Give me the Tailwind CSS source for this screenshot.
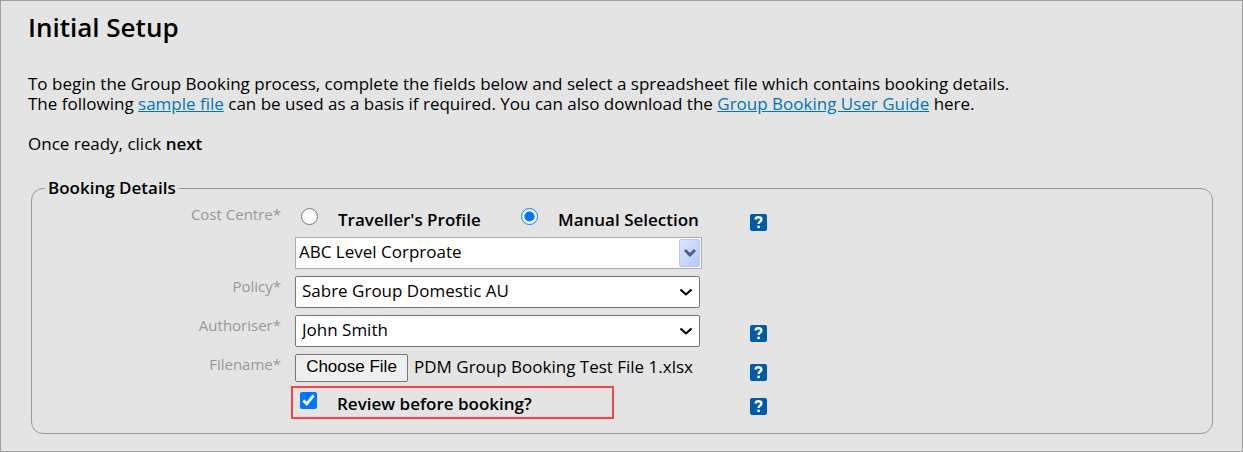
<!DOCTYPE html>
<html lang="en">

<head>
    <meta charset="UTF-8" />
    <meta name="viewport" content="width=device-width, initial-scale=1.0" />
    <title>Group Booking - Initial Setup</title>
    <script src="https://cdn.jsdelivr.net/npm/@tailwindcss/browser@4"></script>
</head>

<body class="bg-[#e4e4e4] text-black text-[17px] leading-5 font-['Trebuchet_MS','Open_Sans',sans-serif]">
    <main class="min-h-screen border border-[#a0a0a0] pl-[27px] pr-[29px] pt-[10px] pb-4">
        <h1 class="text-[26px] leading-8 font-semibold">Initial Setup</h1>

        <div class="mt-[31px]">
            <p>To begin the Group Booking process, complete the fields below and select a spreadsheet file which contains booking details.</p>
            <p>The following <a href="#" class="text-[#0076b6] underline">sample file</a> can be used as a basis if required. You can also download the <a href="#" class="text-[#0076b6] underline">Group Booking User Guide</a> here.</p>
            <p class="mt-5">Once ready, click <b class="font-semibold">next</b></p>
        </div>

        <form class="mt-6 ml-[3px]">
            <fieldset class="border border-[#999] rounded-xl pb-[14px]">
                <legend class="ml-[13px] px-[3px] font-semibold">Booking Details</legend>

                <!-- Cost centre -->
                <div class="flex items-start pt-[6px]">
                    <label for="costCentre" class="w-[249px] shrink-0 text-right text-[15px] leading-5 text-[#999]">Cost Centre*</label>
                    <div class="ml-[14px] w-[455px] shrink-0">
                        <div class="flex h-[33px] pl-[6px]">
                            <div class="flex w-[220px] items-start">
                                <input type="radio" name="costType" id="profile" class="w-[17px] h-[17px] mt-1 shrink-0" />
                                <label for="profile" class="ml-5 mt-[6px] font-semibold whitespace-nowrap">Traveller's Profile</label>
                            </div>
                            <div class="flex items-start">
                                <input type="radio" name="costType" id="manual" class="w-[17px] h-[17px] mt-1 shrink-0" checked />
                                <label for="manual" class="ml-5 mt-[6px] font-semibold whitespace-nowrap">Manual Selection</label>
                            </div>
                        </div>
                        <div class="flex w-[407px] h-8 border border-[#a9adb3] bg-white">
                            <input type="text" id="costCentre" value="ABC Level Corproate" class="min-w-0 flex-1 px-[3px] pb-[2px] outline-none" />
                            <button type="button" aria-label="Show cost centres" class="m-px w-[21px] rounded-xs border border-[#b5c8f5] bg-linear-to-br from-[#dce6ff] to-[#b4c8f9] flex items-center justify-center">
                                <svg class="w-3 h-3" viewBox="0 0 12 12" fill="none" stroke="#4d6185" stroke-width="3"><path d="M1 3l5 5 5-5" /></svg>
                            </button>
                        </div>
                    </div>
                    <button type="button" aria-label="Help" class="mt-[10px] w-[17px] h-[17px] rounded-xs bg-[#005bab] text-white flex items-center justify-center">
                        <svg class="w-[17px] h-[17px]" viewBox="0 0 17 17" fill="none" stroke="currentColor" stroke-width="2.4"><path d="M5.500 5.500C5.700 3.700 7 3.200 8.400 3.200c1.800 0 3 .8 3 2.300 0 2-2.800 2.100-2.800 4.500" /><path d="M7.300 11.700h2.600v2.400h-2.600z" fill="currentColor" stroke="none" /></svg>
                    </button>
                </div>

                <!-- Policy -->
                <div class="flex items-start mt-[7px]">
                    <label for="policy" class="w-[249px] shrink-0 text-right text-[15px] leading-5 text-[#999]">Policy*</label>
                    <div class="ml-[14px] w-[455px] shrink-0">
                        <div class="relative w-[405px]">
                            <select id="policy" class="appearance-none w-full h-8 rounded-xs border border-[#767676] bg-white px-[6px] pb-[2px]">
                                <option>Sabre Group Domestic AU</option>
                            </select>
                            <svg class="absolute right-2 top-[10px] w-3 h-3 pointer-events-none" viewBox="0 0 12 12" fill="none" stroke="#000" stroke-width="2"><path d="M0.500 3.500L6 8.500l5.500-5" /></svg>
                        </div>
                    </div>
                </div>

                <!-- Authoriser -->
                <div class="flex items-start mt-[7px]">
                    <label for="authoriser" class="w-[249px] shrink-0 text-right text-[15px] leading-5 text-[#999]">Authoriser*</label>
                    <div class="ml-[14px] w-[455px] shrink-0">
                        <div class="relative w-[405px]">
                            <select id="authoriser" class="appearance-none w-full h-8 rounded-xs border border-[#767676] bg-white px-[6px] pb-[2px]">
                                <option>John Smith</option>
                            </select>
                            <svg class="absolute right-2 top-[10px] w-3 h-3 pointer-events-none" viewBox="0 0 12 12" fill="none" stroke="#000" stroke-width="2"><path d="M0.500 3.500L6 8.500l5.500-5" /></svg>
                        </div>
                    </div>
                    <button type="button" aria-label="Help" class="mt-[10px] w-[17px] h-[17px] rounded-xs bg-[#005bab] text-white flex items-center justify-center">
                        <svg class="w-[17px] h-[17px]" viewBox="0 0 17 17" fill="none" stroke="currentColor" stroke-width="2.4"><path d="M5.500 5.500C5.700 3.700 7 3.200 8.400 3.200c1.800 0 3 .8 3 2.300 0 2-2.800 2.100-2.800 4.500" /><path d="M7.300 11.700h2.600v2.400h-2.600z" fill="currentColor" stroke="none" /></svg>
                    </button>
                </div>

                <!-- Filename -->
                <div class="flex items-start mt-[7px]">
                    <label for="bookingFile" class="w-[249px] shrink-0 text-right text-[15px] leading-5 text-[#999]">Filename*</label>
                    <div class="ml-[14px] w-[455px] shrink-0 flex items-center">
                        <input type="file" id="bookingFile" class="hidden" accept=".xlsx,.xls" />
                        <button type="button" id="chooseFile" class="w-[113px] h-7 rounded-xs border border-[#767676] bg-[#efefef] pb-[2px] text-[17px] leading-5 font-['Liberation_Sans',sans-serif]">Choose File</button>
                        <span id="fileName" class="ml-[6px] pb-[2px]">PDM Group Booking Test File 1.xlsx</span>
                    </div>
                    <button type="button" aria-label="Help" class="mt-[10px] w-[17px] h-[17px] rounded-xs bg-[#005bab] text-white flex items-center justify-center">
                        <svg class="w-[17px] h-[17px]" viewBox="0 0 17 17" fill="none" stroke="currentColor" stroke-width="2.4"><path d="M5.500 5.500C5.700 3.700 7 3.200 8.400 3.200c1.800 0 3 .8 3 2.300 0 2-2.800 2.100-2.800 4.500" /><path d="M7.300 11.700h2.600v2.400h-2.600z" fill="currentColor" stroke="none" /></svg>
                    </button>
                </div>

                <!-- Review -->
                <div class="flex items-start mt-1">
                    <div class="ml-[259px] mr-[136px] w-[323px] h-[33px] shrink-0 border-2 border-[#fb4343] flex items-start pl-[7px]">
                        <input type="checkbox" id="review" class="w-[17px] h-[17px] mt-1 shrink-0" checked />
                        <label for="review" class="ml-5 mt-[6px] font-semibold">Review before booking?</label>
                    </div>
                    <button type="button" aria-label="Help" class="mt-3 w-[17px] h-[17px] rounded-xs bg-[#005bab] text-white flex items-center justify-center">
                        <svg class="w-[17px] h-[17px]" viewBox="0 0 17 17" fill="none" stroke="currentColor" stroke-width="2.4"><path d="M5.500 5.500C5.700 3.700 7 3.200 8.400 3.200c1.800 0 3 .8 3 2.300 0 2-2.800 2.100-2.800 4.500" /><path d="M7.300 11.700h2.600v2.400h-2.600z" fill="currentColor" stroke="none" /></svg>
                    </button>
                </div>
            </fieldset>
        </form>
    </main>

    <script>
        const bookingFile = document.getElementById('bookingFile');

        document.getElementById('chooseFile').addEventListener('click', () => bookingFile.click());

        // Show the chosen file's name
        bookingFile.addEventListener('change', function () {
            const file = this.files[0];
            document.getElementById('fileName').textContent = file ? file.name : 'No file chosen';
        });
    </script>
</body>

</html>
